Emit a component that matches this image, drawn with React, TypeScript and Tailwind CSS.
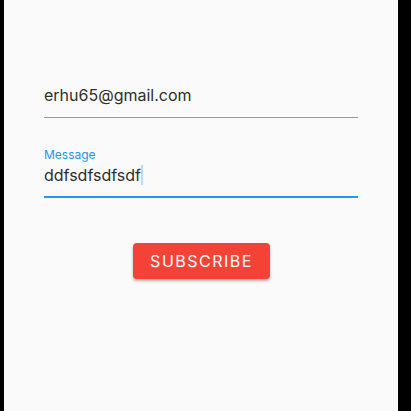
import React from "react";

export default function App() {
  return (
    <div className="flex h-[411px] w-[411px] bg-black" style={{ fontFamily: "Inter, Roboto, sans-serif" }}>
      <div className="w-[4px] shrink-0 bg-black" />
      <div className="flex w-[394px] shrink-0 flex-col bg-[#fafafa] px-[40px] pt-[83px]">
        <div className="border-b border-[#9a9a9a] pb-[10px]">
          <div className="text-[16px] leading-[24px] text-[#2e2e2e]">erhu65@gmail.com</div>
        </div>
        <div className="mt-[29px] border-b-2 border-[#2196f3] pb-[9px]">
          <div className="text-[12px] leading-[16px] text-[#2196f3]">Message</div>
          <div className="flex items-center text-[16px] leading-[24px] text-[#2e2e2e]">
            <span>ddfsdfsdfsdf</span>
            <span className="h-[20px] w-[2px] bg-[#bcdaf7]" />
          </div>
        </div>
        <div className="mt-[45px] flex justify-center">
          <button className="flex h-[36px] w-[137px] items-center justify-center rounded-[4px] bg-[#f44336] pl-[1px] text-[16px] tracking-[1.5px] text-white shadow-[0_2px_3px_rgba(0,0,0,0.3)]">
            SUBSCRIBE
          </button>
        </div>
      </div>
      <div className="flex-1 bg-black" />
    </div>
  );
}
